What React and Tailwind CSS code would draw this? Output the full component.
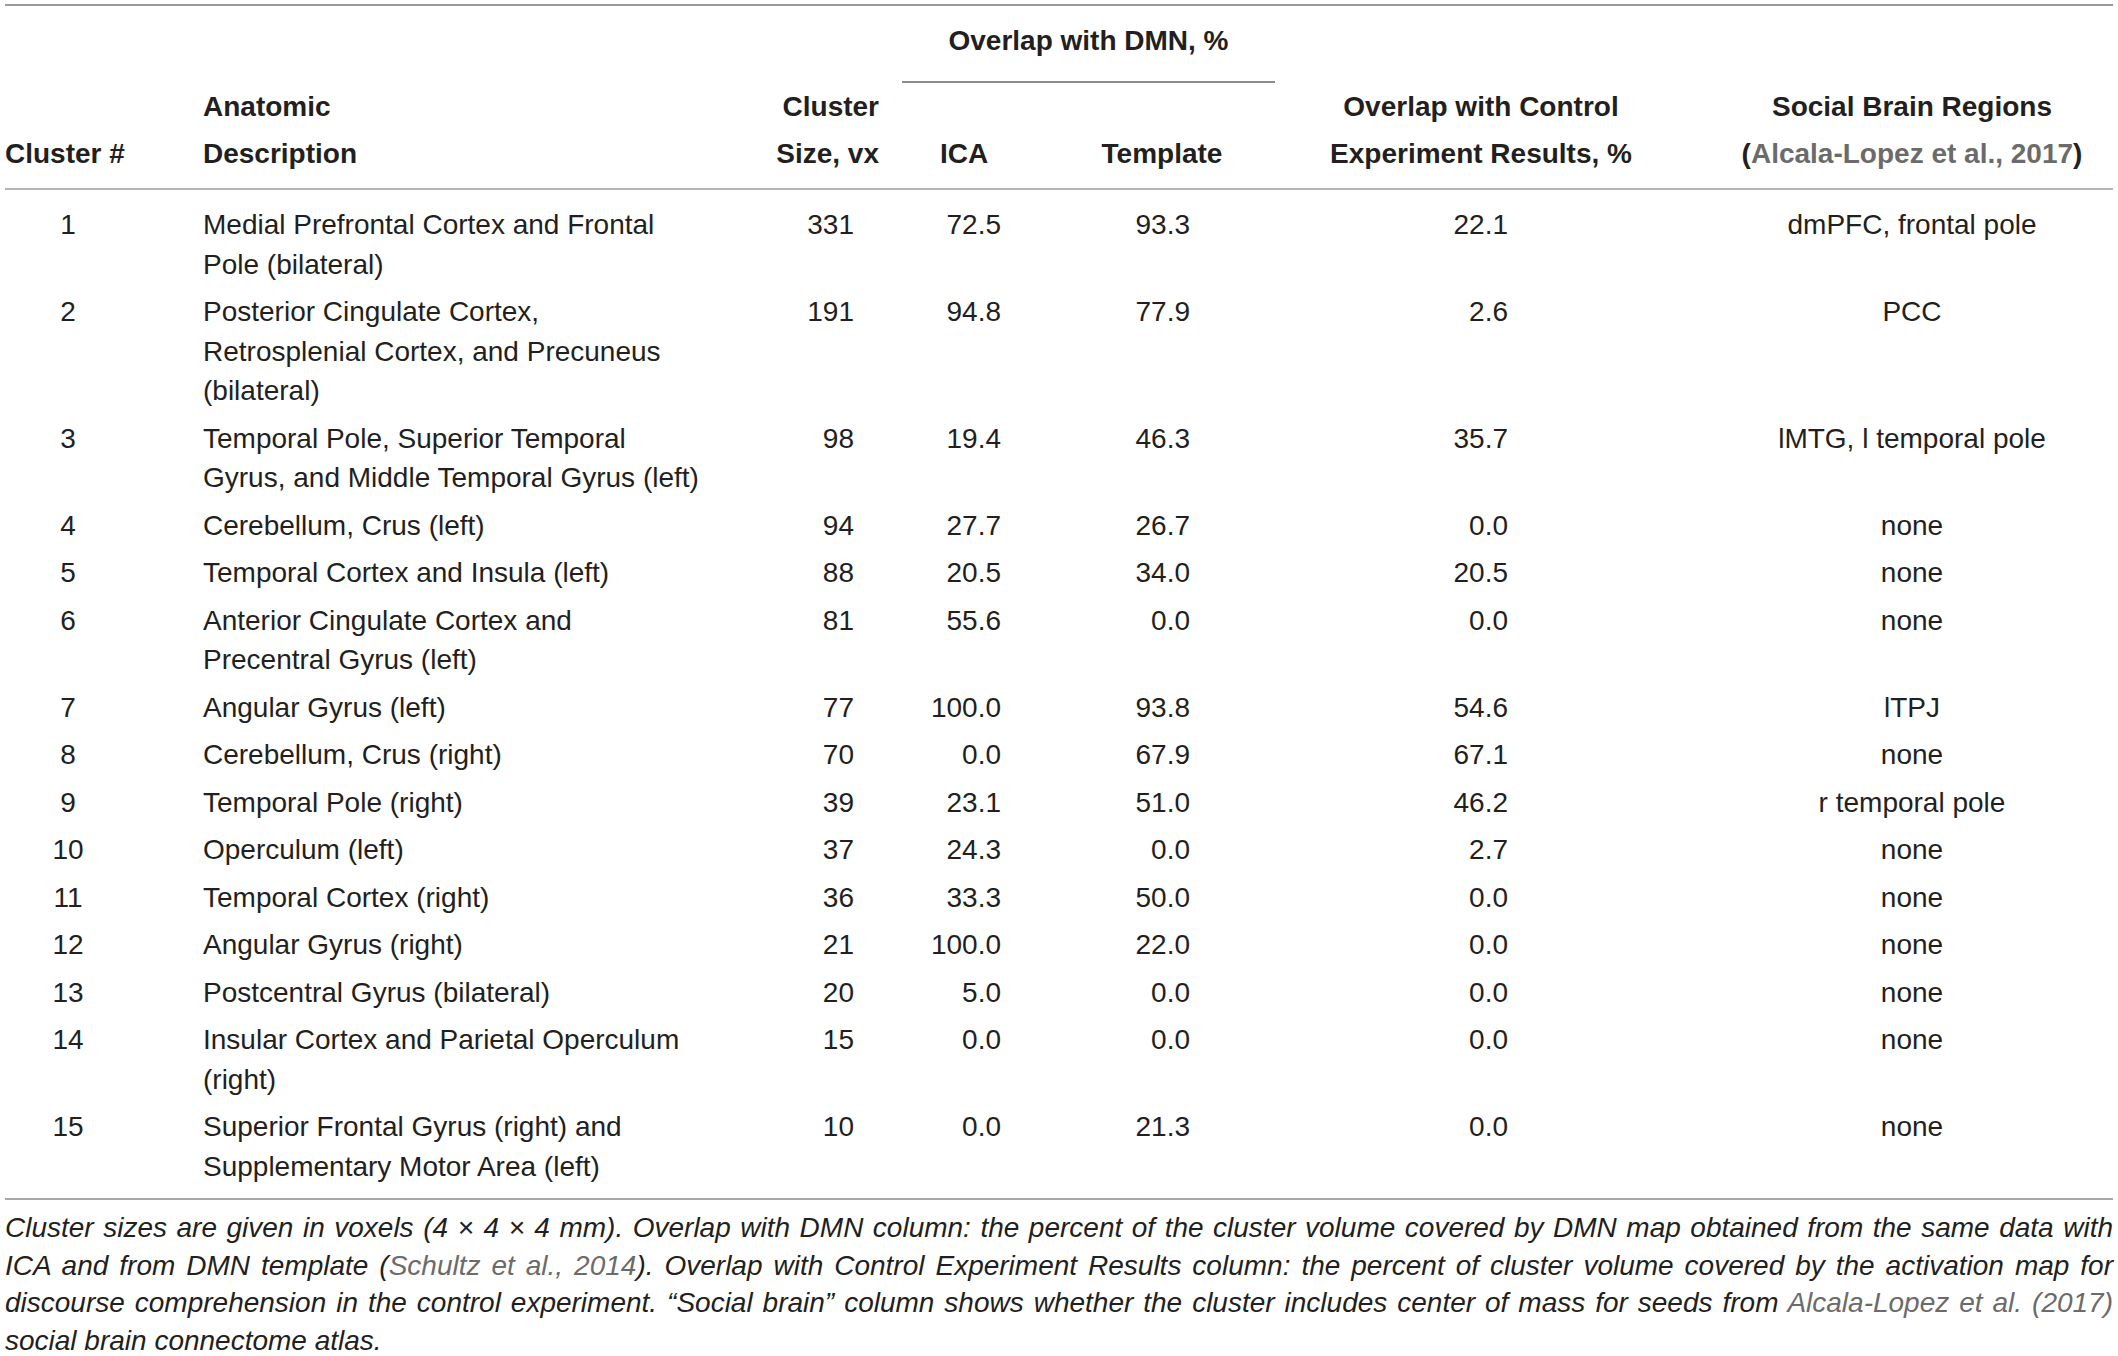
const rows = [
  [1, ['Medial Prefrontal Cortex and Frontal', 'Pole (bilateral)'], '331', '72.5', '93.3', '22.1', 'dmPFC, frontal pole'],
  [2, ['Posterior Cingulate Cortex,', 'Retrosplenial Cortex, and Precuneus', '(bilateral)'], '191', '94.8', '77.9', '2.6', 'PCC'],
  [3, ['Temporal Pole, Superior Temporal', 'Gyrus, and Middle Temporal Gyrus (left)'], '98', '19.4', '46.3', '35.7', 'lMTG, l temporal pole'],
  [4, ['Cerebellum, Crus (left)'], '94', '27.7', '26.7', '0.0', 'none'],
  [5, ['Temporal Cortex and Insula (left)'], '88', '20.5', '34.0', '20.5', 'none'],
  [6, ['Anterior Cingulate Cortex and', 'Precentral Gyrus (left)'], '81', '55.6', '0.0', '0.0', 'none'],
  [7, ['Angular Gyrus (left)'], '77', '100.0', '93.8', '54.6', 'lTPJ'],
  [8, ['Cerebellum, Crus (right)'], '70', '0.0', '67.9', '67.1', 'none'],
  [9, ['Temporal Pole (right)'], '39', '23.1', '51.0', '46.2', 'r temporal pole'],
  [10, ['Operculum (left)'], '37', '24.3', '0.0', '2.7', 'none'],
  [11, ['Temporal Cortex (right)'], '36', '33.3', '50.0', '0.0', 'none'],
  [12, ['Angular Gyrus (right)'], '21', '100.0', '22.0', '0.0', 'none'],
  [13, ['Postcentral Gyrus (bilateral)'], '20', '5.0', '0.0', '0.0', 'none'],
  [14, ['Insular Cortex and Parietal Operculum', '(right)'], '15', '0.0', '0.0', '0.0', 'none'],
  [15, ['Superior Frontal Gyrus (right) and', 'Supplementary Motor Area (left)'], '10', '0.0', '21.3', '0.0', 'none'],
]

const cols = 'grid grid-cols-[198px_537px_162px_168px_205px_423px_420px]'

function Row({ r }) {
  const [n, desc, size, ica, tpl, ctrl, social] = r
  return (
    <div className={`${cols} py-[4px] leading-[39.5px]`}>
      <div className="w-[126px] text-center">{n}</div>
      <div>
        {desc.map((l) => (
          <div key={l} className="whitespace-nowrap">{l}</div>
        ))}
      </div>
      <div className="pr-[48px] text-right">{size}</div>
      <div className="pr-[69px] text-right">{ica}</div>
      <div className="pr-[85px] text-right">{tpl}</div>
      <div className="pr-[190px] text-right">{ctrl}</div>
      <div className="pl-[8px] text-center whitespace-nowrap">{social}</div>
    </div>
  )
}

const lastJustify = 'text-justify [text-align-last:justify] whitespace-nowrap'

export default function App() {
  return (
    <div className="h-[1356px] w-[2118px] overflow-hidden bg-white font-['Liberation_Sans',Arial,sans-serif] text-[28px] text-[#231f20]">
      <div className="pl-[5px] pr-[5px] pt-[4px]">
        <div className="border-t-2 border-[#9a9a9a]" />
        {/* header */}
        <div className={`${cols} font-bold leading-[47px]`}>
          <div className="col-start-4 col-span-2 h-[77px] border-b-2 border-[#8c8c8c] pt-[11px] text-center">
            Overlap with DMN, %
          </div>
        </div>
        <div className={`${cols} h-[107px] border-b-2 border-[#b4b4b4] font-bold leading-[47px]`}>
          <div className="flex flex-col justify-end pb-[11px] whitespace-nowrap">Cluster #</div>
          <div className="flex flex-col justify-end pb-[11px]">
            <div>Anatomic</div>
            <div>Description</div>
          </div>
          <div className="flex flex-col items-end justify-end pb-[11px] pr-[23px]">
            <div>Cluster</div>
            <div className="whitespace-nowrap">Size, vx</div>
          </div>
          <div className="flex flex-col justify-end pb-[11px] pl-[38px]">ICA</div>
          <div className="flex flex-col justify-end pb-[11px] pr-[21px] text-center">Template</div>
          <div className="flex flex-col justify-end pb-[11px] pr-[11px] text-center whitespace-nowrap">
            <div>Overlap with Control</div>
            <div>Experiment Results, %</div>
          </div>
          <div className="flex flex-col justify-end pb-[11px] pl-[8px] text-center whitespace-nowrap">
            <div>Social Brain Regions</div>
            <div>
              (<span className="text-[#6b6b6b]">Alcala-Lopez et al., 2017</span>)
            </div>
          </div>
        </div>
        {/* body */}
        <div className="border-b-2 border-[#a8a8a8] pb-[8px] pt-[11px]">
          {rows.map((r) => (
            <Row key={r[0]} r={r} />
          ))}
        </div>
        {/* footnote */}
        <div className="pt-[9px] text-[28px] italic leading-[37.5px]">
          <div className={lastJustify}>
            Cluster sizes are given in voxels (4 × 4 × 4 mm). Overlap with DMN column: the percent of the cluster volume covered by DMN map obtained from the same data with
          </div>
          <div className={lastJustify}>
            ICA and from DMN template (<span className="text-[#6b6b6b]">Schultz et al., 2014</span>). Overlap with Control Experiment Results column: the percent of cluster volume covered by the activation map for
          </div>
          <div className={lastJustify}>
            discourse comprehension in the control experiment. “Social brain” column shows whether the cluster includes center of mass for seeds from <span className="text-[#6b6b6b]">Alcala-Lopez et al. (2017)</span>
          </div>
          <div>social brain connectome atlas.</div>
        </div>
      </div>
    </div>
  )
}
